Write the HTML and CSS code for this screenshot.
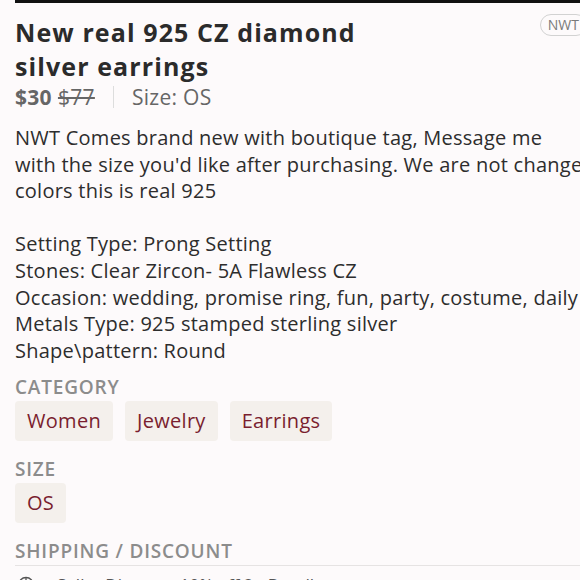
FILE: index.html
```html
<!DOCTYPE html>
<html lang="en">
<head>
    <meta charset="UTF-8">
    <meta name="viewport" content="width=device-width, initial-scale=1.0">
    <title>New real 925 CZ diamond silver earrings</title>
    <link rel="stylesheet" href="styles.css">
</head>
<body>
    <div class="listing">
        <div class="top-rule"></div>

        <div class="title-row">
            <h1 class="title">New real 925 CZ diamond silver earrings</h1>
            <span class="badge">NWT</span>
        </div>

        <div class="price-row">
            <span class="price">$30</span>
            <span class="old-price">$77</span>
            <span class="sep"></span>
            <span class="size">Size: OS</span>
        </div>

        <div class="description">NWT Comes brand new with boutique tag, Message me
with the size you'd like after purchasing.  We are not changed
colors this is real 925

Setting Type: Prong Setting
Stones: Clear Zircon- 5A Flawless CZ
Occasion: wedding, promise ring, fun, party, costume, daily
Metals Type: 925 stamped sterling silver
Shape\pattern: Round</div>

        <div class="section">
            <div class="label">Category</div>
            <div class="chips">
                <span class="chip">Women</span>
                <span class="chip">Jewelry</span>
                <span class="chip">Earrings</span>
            </div>
        </div>

        <div class="section">
            <div class="label">Size</div>
            <div class="chips">
                <span class="chip">OS</span>
            </div>
        </div>

        <div class="section">
            <div class="label ruled">Shipping / Discount</div>
            <div class="discount">
                <svg class="icon" width="18" height="18" viewBox="0 0 18 18" fill="none" stroke="#555" stroke-width="1.3">
                    <circle cx="9" cy="9" r="7.5"/>
                    <path d="M9 1.5v7.5M2.5 9h13"/>
                </svg>
                <span>Seller Discount 10% off 2+ Bundle</span>
            </div>
        </div>
    </div>
</body>
</html>
```

FILE: styles.css
```css
html, body {
    margin: 0;
    padding: 0;
    background: #fdfafb;
    overflow: hidden;
}
body {
    font-family: "Open Sans", Lato, sans-serif;
    color: #2b2b2b;
}
.listing {
    width: 585px;
    padding-left: 15px;
}
.top-rule {
    height: 3px;
    background: #111;
    margin-right: -40px;
}
.title-row {
    display: flex;
    justify-content: space-between;
    align-items: flex-start;
    margin-top: 12px;
}
.title {
    margin: 0;
    width: 370px;
    font-size: 25px;
    line-height: 34px;
    font-weight: 700;
    letter-spacing: 1.1px;
    color: #2b2b2b;
}
.badge {
    margin-top: -1px;
    margin-right: 13px;
    padding: 1px 7px;
    border: 1px solid #d2d2d2;
    border-radius: 12px;
    font-size: 14px;
    line-height: 18px;
    color: #7a7a7a;
}
.price-row {
    display: flex;
    align-items: center;
    font-size: 21px;
    line-height: 28px;
    letter-spacing: 0.3px;
    color: #666;
}
.price {
    font-weight: 700;
}
.old-price {
    margin-left: 6px;
    text-decoration: line-through;
}
.sep {
    width: 1px;
    height: 22px;
    background: #ddd;
    margin: 0 18px;
}
.description {
    white-space: pre-line;
    font-size: 20px;
    line-height: 26.6px;
    letter-spacing: 0.25px;
    color: #2d2d2d;
    margin-top: 14px;
    width: 620px;
}
.section {
    margin-top: 10px;
}
.section + .section {
    margin-top: 15px;
}
.label {
    text-transform: uppercase;
    font-size: 19px;
    line-height: 26px;
    letter-spacing: 0.8px;
    color: #8c8c8c;
    font-weight: 600;
}
.label.ruled {
    border-bottom: 1px solid #e6e3e3;
    padding-bottom: 1px;
    margin-right: -30px;
}
.chips {
    display: flex;
    gap: 12px;
    margin-top: 1px;
}
.chip {
    background: #f4f0ec;
    border-radius: 4px;
    padding: 7px 12px;
    font-size: 20px;
    line-height: 26px;
    letter-spacing: 0.3px;
    color: #7a1e2f;
}
.discount {
    display: flex;
    align-items: center;
    gap: 22px;
    margin-top: 7px;
    padding-left: 2px;
    font-size: 17px;
    color: #555;
}
```
